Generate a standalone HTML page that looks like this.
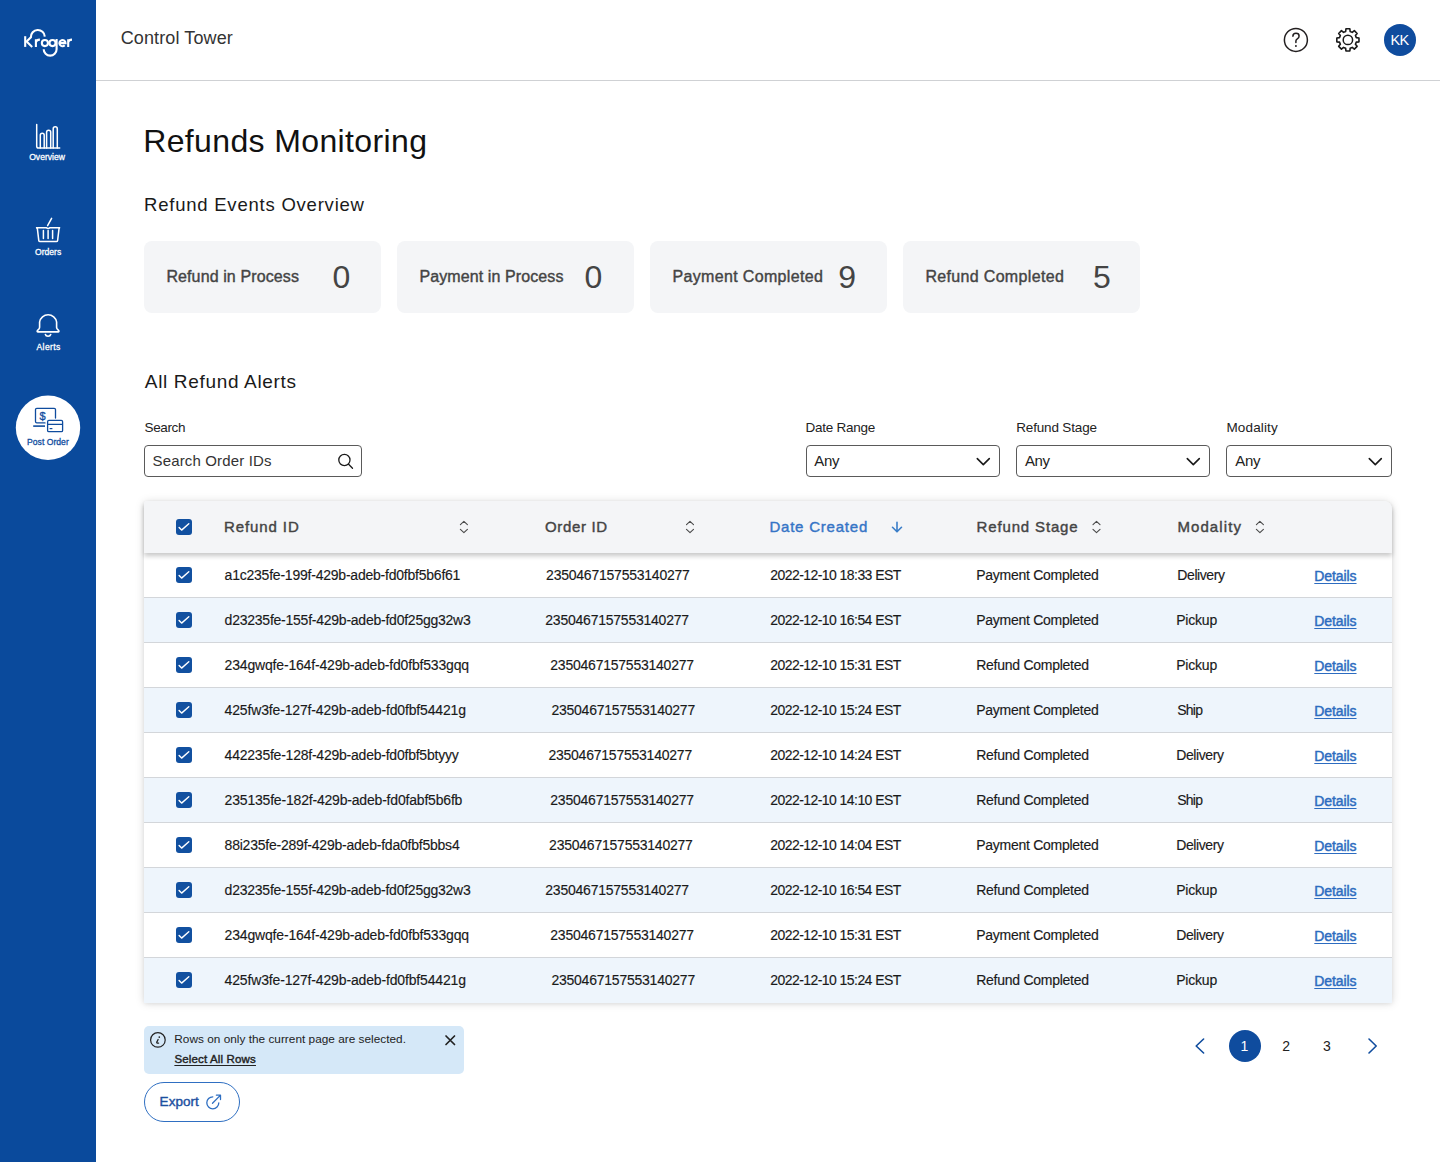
<!DOCTYPE html>
<html><head><meta charset="utf-8"><title>Control Tower - Refunds Monitoring</title>
<style>
*{box-sizing:border-box}
html,body{margin:0;padding:0}
body{width:1440px;height:1162px;overflow:hidden;position:relative;background:#fff;font-family:"Liberation Sans",sans-serif}
.t{position:absolute;white-space:nowrap;line-height:1}
.abs{position:absolute}
.side{left:0;top:0;width:96px;height:1162px;background:#0A4A9C}
.hdrline{left:96px;top:80px;width:1344px;height:1px;background:#CFD1D4}
.card{width:237px;height:72px;top:241px;background:#F4F5F7;border-radius:8px}
.inp{top:445px;height:32px;border:1px solid #5A5A5A;border-radius:4px;background:#fff}
.tbl{left:144px;top:501px;width:1248px;height:501px;border-radius:3px 8px 0 0;box-shadow:0 1px 10px rgba(0,0,0,0.15),0 2px 4px rgba(0,0,0,0.06);background:#fff}
.th{left:144px;top:501px;width:1248px;height:52px;background:#F4F5F7;border-radius:3px 8px 0 0;box-shadow:0 3px 5px rgba(0,0,0,0.22)}
.row{left:144px;width:1248px;height:45px}
.sep{left:144px;width:1248px;height:1px;background:#D3D6DA}
.cb{left:176px;width:16px;height:16px;border-radius:3px;background:#1150A0}
.cb svg{position:absolute;left:0;top:0}
svg{position:absolute;overflow:visible}
</style></head>
<body>
<!-- sidebar -->
<div class="abs side"></div>
<svg style="left:0;top:0" width="96" height="470" viewBox="0 0 96 470">
  <!-- Kroger logo -->
  <g fill="none" stroke="#fff" stroke-width="2.1">
    <path d="M25.2 36.2 V46.9"/>
    <path d="M32.2 46.9 L26.6 41.6 L30.9 37.3 A6.95 6.95 0 0 1 44.8 36.6"/>
    <path d="M35.9 46.9 V39.2 M35.9 42.2 Q36.4 39.6 39.9 39.6"/>
    <circle cx="44.9" cy="43.05" r="3.05"/>
    <circle cx="52.5" cy="43.05" r="3.05"/>
    <path d="M56.6 38.9 V49.2 A6.45 6.45 0 0 1 43.7 49.2"/>
    <path d="M59.4 43.1 H65.5 A3.05 3.05 0 1 0 64.7 45.2"/>
    <path d="M68.2 46.9 V39.2 M68.2 42.2 Q68.7 39.6 72 39.6"/>
  </g>
  <!-- overview icon -->
  <g fill="none" stroke="#fff" stroke-width="1.5" stroke-linecap="round" stroke-linejoin="round">
    <path d="M36.7 124.4 V146.3 Q36.7 148.1 38.5 148.1 H59.7"/>
    <path d="M40.3 148 V135.2 A1.95 1.95 0 0 1 44.2 135.2 V148"/>
    <path d="M46.6 148 V132.3 A2.05 2.05 0 0 1 50.7 132.3 V148"/>
    <path d="M53.2 148 V128.9 A2.05 2.05 0 0 1 57.3 128.9 V148"/>
  </g>
  <!-- orders basket -->
  <g fill="none" stroke="#fff" stroke-width="1.5" stroke-linecap="round" stroke-linejoin="round">
    <path d="M51.6 218.4 L47.6 225.6"/>
    <path d="M36.6 227.7 H46.2 Q48.1 229.2 50 227.7 H59.6 L59 228.8 L57.6 240.6 Q57.4 241.6 56.4 241.6 H40 Q39 241.6 38.8 240.6 L37.4 228.8 Z"/>
    <path d="M43.4 230.4 V238.4 M48.1 230.4 V238.4 M52.6 230.4 V238.4"/>
  </g>
  <!-- alerts bell -->
  <g fill="none" stroke="#fff" stroke-width="1.6" stroke-linecap="round" stroke-linejoin="round">
    <path d="M37.9 331.9 H58.2 Q59.2 331.9 58.8 330.8 L56.9 328.4 Q56.6 327.9 56.6 327 V322 A8.6 8.6 0 0 0 39.6 322 V327 Q39.6 327.9 39.3 328.4 L37.3 330.8 Q36.9 331.9 37.9 331.9 Z"/>
    <path d="M45.4 334.5 A2.7 2.2 0 0 0 50.7 334.5"/>
  </g>
  <!-- post order bubble -->
  <circle cx="48" cy="427.8" r="32.2" fill="#fff"/>
  <g fill="none" stroke="#0F4C9E" stroke-width="1.3" stroke-linecap="round" stroke-linejoin="round">
    <path d="M45 422.9 H36.8 Q35.5 422.9 35.5 421.6 V409.6 Q35.5 408.3 36.8 408.3 H54.2 Q55.5 408.3 55.5 409.6 V418"/>
    <rect x="47.6" y="420.4" width="15" height="11.3" rx="1.3"/>
    <path d="M47.8 424.3 H62.4"/>
  </g>
  <path d="M33.2 426.1 H45" stroke="#0F4C9E" stroke-width="1.6"/>
  <path d="M49.6 428.6 H52.4" stroke="#0F4C9E" stroke-width="1.2"/>
  <text x="42.5" y="420.4" font-family="Liberation Sans" font-weight="400" font-size="11" fill="#0F4C9E" stroke="#0F4C9E" stroke-width="0.3" text-anchor="middle">$</text>
</svg>

<!-- header -->
<div class="abs hdrline"></div>
<svg style="left:1270px;top:20px" width="170" height="44" viewBox="1270 20 170 44">
  <circle cx="1295.9" cy="39.9" r="11.5" fill="none" stroke="#231F20" stroke-width="1.5"/>
  <path d="M1292.9 36.2 Q1292.9 33.3 1296 33.3 Q1299.1 33.3 1299.1 36 Q1299.1 37.9 1297.3 38.9 Q1295.9 39.7 1295.9 41.1 V42.6" fill="none" stroke="#231F20" stroke-width="1.5" stroke-linecap="round"/>
  <circle cx="1295.9" cy="46" r="0.95" fill="#231F20"/>
  <path d="M1345.65 31.50 L1345.95 28.82 L1349.85 28.82 L1350.15 31.50 L1352.25 32.37 L1354.35 30.68 L1357.12 33.45 L1355.43 35.55 L1356.30 37.65 L1358.98 37.95 L1358.98 41.85 L1356.30 42.15 L1355.43 44.25 L1357.12 46.35 L1354.35 49.12 L1352.25 47.43 L1350.15 48.30 L1349.85 50.98 L1345.95 50.98 L1345.65 48.30 L1343.55 47.43 L1341.45 49.12 L1338.68 46.35 L1340.37 44.25 L1339.50 42.15 L1336.82 41.85 L1336.82 37.95 L1339.50 37.65 L1340.37 35.55 L1338.68 33.45 L1341.45 30.68 L1343.55 32.37 Z" fill="none" stroke="#1a1a1a" stroke-width="1.6" stroke-linejoin="round"/><circle cx="1347.9" cy="39.9" r="4.7" fill="none" stroke="#1a1a1a" stroke-width="1.5"/>
  <circle cx="1400" cy="39.9" r="16" fill="#0F4C9E"/>
</svg>

<!-- cards -->
<div class="abs card" style="left:144px"></div>
<div class="abs card" style="left:397px"></div>
<div class="abs card" style="left:650px"></div>
<div class="abs card" style="left:903px"></div>

<!-- inputs -->
<div class="abs inp" style="left:144px;width:218px"></div>
<div class="abs inp" style="left:806px;width:194px"></div>
<div class="abs inp" style="left:1016px;width:194px"></div>
<div class="abs inp" style="left:1226px;width:166px"></div>
<svg style="left:300px;top:440px" width="1100" height="40" viewBox="300 440 1100 40">
  <g fill="none" stroke="#1a1a1a" stroke-width="1.3" stroke-linecap="round">
    <circle cx="344.4" cy="460" r="5.6"/>
    <path d="M348.6 464.3 L352.5 468.3"/>
  </g>
  <g fill="none" stroke="#1a1a1a" stroke-width="1.6" stroke-linecap="round" stroke-linejoin="round">
    <path d="M977.3 458.6 L983.3 464.6 L989.3 458.6"/>
    <path d="M1187.3 458.6 L1193.3 464.6 L1199.3 458.6"/>
    <path d="M1369.3 458.6 L1375.3 464.6 L1381.3 458.6"/>
  </g>
</svg>

<!-- table -->
<div class="abs tbl"></div>
<div class="abs row" style="top:553px;background:#fff"></div>
<div class="abs row" style="top:598px;background:#EEF5FC"></div>
<div class="abs row" style="top:643px;background:#fff"></div>
<div class="abs row" style="top:688px;background:#EEF5FC"></div>
<div class="abs row" style="top:733px;background:#fff"></div>
<div class="abs row" style="top:778px;background:#EEF5FC"></div>
<div class="abs row" style="top:823px;background:#fff"></div>
<div class="abs row" style="top:868px;background:#EEF5FC"></div>
<div class="abs row" style="top:913px;background:#fff"></div>
<div class="abs row" style="top:958px;background:#EEF5FC"></div>
<div class="abs sep" style="top:597px"></div>
<div class="abs sep" style="top:642px"></div>
<div class="abs sep" style="top:687px"></div>
<div class="abs sep" style="top:732px"></div>
<div class="abs sep" style="top:777px"></div>
<div class="abs sep" style="top:822px"></div>
<div class="abs sep" style="top:867px"></div>
<div class="abs sep" style="top:912px"></div>
<div class="abs sep" style="top:957px"></div>
<div class="abs th"></div>
<div class="abs cb" style="top:519px"><svg width="16" height="16" viewBox="0 0 16 16"><path d="M3.1 8.5 L5.6 11.1 L12.8 4.8" fill="none" stroke="#fff" stroke-width="1.4" stroke-linecap="round" stroke-linejoin="round"/></svg></div>
<div class="abs cb" style="top:567px"><svg width="16" height="16" viewBox="0 0 16 16"><path d="M3.1 8.5 L5.6 11.1 L12.8 4.8" fill="none" stroke="#fff" stroke-width="1.4" stroke-linecap="round" stroke-linejoin="round"/></svg></div>
<div class="abs cb" style="top:612px"><svg width="16" height="16" viewBox="0 0 16 16"><path d="M3.1 8.5 L5.6 11.1 L12.8 4.8" fill="none" stroke="#fff" stroke-width="1.4" stroke-linecap="round" stroke-linejoin="round"/></svg></div>
<div class="abs cb" style="top:657px"><svg width="16" height="16" viewBox="0 0 16 16"><path d="M3.1 8.5 L5.6 11.1 L12.8 4.8" fill="none" stroke="#fff" stroke-width="1.4" stroke-linecap="round" stroke-linejoin="round"/></svg></div>
<div class="abs cb" style="top:702px"><svg width="16" height="16" viewBox="0 0 16 16"><path d="M3.1 8.5 L5.6 11.1 L12.8 4.8" fill="none" stroke="#fff" stroke-width="1.4" stroke-linecap="round" stroke-linejoin="round"/></svg></div>
<div class="abs cb" style="top:747px"><svg width="16" height="16" viewBox="0 0 16 16"><path d="M3.1 8.5 L5.6 11.1 L12.8 4.8" fill="none" stroke="#fff" stroke-width="1.4" stroke-linecap="round" stroke-linejoin="round"/></svg></div>
<div class="abs cb" style="top:792px"><svg width="16" height="16" viewBox="0 0 16 16"><path d="M3.1 8.5 L5.6 11.1 L12.8 4.8" fill="none" stroke="#fff" stroke-width="1.4" stroke-linecap="round" stroke-linejoin="round"/></svg></div>
<div class="abs cb" style="top:837px"><svg width="16" height="16" viewBox="0 0 16 16"><path d="M3.1 8.5 L5.6 11.1 L12.8 4.8" fill="none" stroke="#fff" stroke-width="1.4" stroke-linecap="round" stroke-linejoin="round"/></svg></div>
<div class="abs cb" style="top:882px"><svg width="16" height="16" viewBox="0 0 16 16"><path d="M3.1 8.5 L5.6 11.1 L12.8 4.8" fill="none" stroke="#fff" stroke-width="1.4" stroke-linecap="round" stroke-linejoin="round"/></svg></div>
<div class="abs cb" style="top:927px"><svg width="16" height="16" viewBox="0 0 16 16"><path d="M3.1 8.5 L5.6 11.1 L12.8 4.8" fill="none" stroke="#fff" stroke-width="1.4" stroke-linecap="round" stroke-linejoin="round"/></svg></div>
<div class="abs cb" style="top:972px"><svg width="16" height="16" viewBox="0 0 16 16"><path d="M3.1 8.5 L5.6 11.1 L12.8 4.8" fill="none" stroke="#fff" stroke-width="1.4" stroke-linecap="round" stroke-linejoin="round"/></svg></div>
<svg style="left:440px;top:510px" width="840" height="30" viewBox="440 510 840 30"><path d="M460.4 524.6 L463.9 521.3 L467.4 524.6 M460.4 529.4 L463.9 532.7 L467.4 529.4 M686.5 524.6 L690.0 521.3 L693.5 524.6 M686.5 529.4 L690.0 532.7 L693.5 529.4 M1093.0 524.6 L1096.5 521.3 L1100.0 524.6 M1093.0 529.4 L1096.5 532.7 L1100.0 529.4 M1256.4 524.6 L1259.9 521.3 L1263.4 524.6 M1256.4 529.4 L1259.9 532.7 L1263.4 529.4" fill="none" stroke="#4a4a4a" stroke-width="1.1" stroke-linecap="round" stroke-linejoin="round"/><path d="M897 522.2 V531 M892.5 527.3 L897 531.8 L901.5 527.3" fill="none" stroke="#3A7DC8" stroke-width="1.6" stroke-linecap="round" stroke-linejoin="round"/></svg>

<!-- banner -->
<div class="abs" style="left:144px;top:1026px;width:320px;height:48px;background:#D5E8F8;border-radius:5px"></div>
<svg style="left:140px;top:1026px" width="330" height="48" viewBox="140 1026 330 48">
  <circle cx="157.9" cy="1039.9" r="7.3" fill="none" stroke="#222" stroke-width="1.2"/>
  <path d="M158.1 1039.5 L156.8 1042.1 Q156.3 1043.5 158.6 1043.1" fill="none" stroke="#222" stroke-width="1.3" stroke-linecap="round" stroke-linejoin="round"/>
  <circle cx="159.3" cy="1037.1" r="0.85" fill="#222"/>
  <path d="M446 1036 L454.5 1044.5 M454.5 1036 L446 1044.5" stroke="#222" stroke-width="1.7" stroke-linecap="round"/>
</svg>

<!-- export -->
<div class="abs" style="left:144px;top:1082px;width:96px;height:40px;border:1.2px solid #2F6FC2;border-radius:20px"></div>
<svg style="left:200px;top:1088px" width="30" height="28" viewBox="200 1088 30 28">
  <g fill="none" stroke="#2F6FC2" stroke-width="1.3" stroke-linecap="round" stroke-linejoin="round">
    <path d="M212.8 1096.8 A6 6 0 1 0 218.8 1102.8"/>
    <path d="M212.5 1103.2 L220.3 1095.4 M216.4 1095.2 H220.5 V1099.5"/>
  </g>
</svg>

<!-- pagination -->
<svg style="left:1180px;top:1020px" width="210" height="52" viewBox="1180 1020 210 52">
  <g fill="none" stroke="#0F4C9E" stroke-width="1.6" stroke-linecap="round" stroke-linejoin="round">
    <path d="M1203.6 1039 L1196.2 1046 L1203.6 1053"/>
    <path d="M1369 1039 L1376.2 1046 L1369 1053"/>
  </g>
  <circle cx="1245" cy="1046" r="16" fill="#0F4C9E"/>
</svg>

<div class="t" style="left:120.70px;top:28.56px;font-size:18px;font-weight:400;color:#333;letter-spacing:0.121px;">Control Tower</div>
<div class="t" style="left:29.20px;top:152.92px;font-size:8.6px;font-weight:400;color:#fff;letter-spacing:-0.015px;-webkit-text-stroke:0.28px #fff;">Overview</div>
<div class="t" style="left:35.00px;top:247.92px;font-size:8.6px;font-weight:400;color:#fff;-webkit-text-stroke:0.28px #fff;">Orders</div>
<div class="t" style="left:36.50px;top:342.92px;font-size:8.6px;font-weight:400;color:#fff;letter-spacing:0.386px;-webkit-text-stroke:0.28px #fff;">Alerts</div>
<div class="t" style="left:27.00px;top:437.92px;font-size:8.6px;font-weight:400;color:#0F4C9E;letter-spacing:0.023px;-webkit-text-stroke:0.28px #0F4C9E;">Post Order</div>
<div class="t" style="left:1390.40px;top:32.83px;font-size:14.5px;font-weight:400;color:#fff;letter-spacing:-0.671px;">KK</div>
<div class="t" style="left:143.20px;top:125.21px;font-size:32px;font-weight:400;color:#111;letter-spacing:0.371px;">Refunds Monitoring</div>
<div class="t" style="left:144.00px;top:196.04px;font-size:18.5px;font-weight:400;color:#1a1a1a;letter-spacing:0.780px;">Refund Events Overview</div>
<div class="t" style="left:144.80px;top:372.12px;font-size:19px;font-weight:400;color:#1a1a1a;letter-spacing:0.668px;">All Refund Alerts</div>
<div class="t" style="left:166.40px;top:268.96px;font-size:16px;font-weight:400;color:#444;letter-spacing:0.110px;-webkit-text-stroke:0.4px #444;">Refund in Process</div>
<div class="t" style="left:332.60px;top:260.91px;font-size:32px;font-weight:400;color:#444;">0</div>
<div class="t" style="left:419.40px;top:268.96px;font-size:16px;font-weight:400;color:#444;letter-spacing:0.101px;-webkit-text-stroke:0.4px #444;">Payment in Process</div>
<div class="t" style="left:584.60px;top:260.91px;font-size:32px;font-weight:400;color:#444;">0</div>
<div class="t" style="left:672.40px;top:268.96px;font-size:16px;font-weight:400;color:#444;letter-spacing:0.346px;-webkit-text-stroke:0.4px #444;">Payment Completed</div>
<div class="t" style="left:838.30px;top:260.91px;font-size:32px;font-weight:400;color:#444;">9</div>
<div class="t" style="left:925.40px;top:268.96px;font-size:16px;font-weight:400;color:#444;letter-spacing:0.332px;-webkit-text-stroke:0.4px #444;">Refund Completed</div>
<div class="t" style="left:1093.00px;top:260.91px;font-size:32px;font-weight:400;color:#444;">5</div>
<div class="t" style="left:144.50px;top:420.67px;font-size:13.5px;font-weight:400;color:#222;letter-spacing:-0.353px;">Search</div>
<div class="t" style="left:805.60px;top:420.77px;font-size:13.5px;font-weight:400;color:#222;letter-spacing:-0.271px;">Date Range</div>
<div class="t" style="left:1016.20px;top:420.77px;font-size:13.5px;font-weight:400;color:#222;letter-spacing:-0.159px;">Refund Stage</div>
<div class="t" style="left:1226.50px;top:420.77px;font-size:13.5px;font-weight:400;color:#222;letter-spacing:0.126px;">Modality</div>
<div class="t" style="left:152.50px;top:453.30px;font-size:15px;font-weight:400;color:#333;letter-spacing:0.153px;">Search Order IDs</div>
<div class="t" style="left:814.30px;top:453.20px;font-size:15px;font-weight:400;color:#222;letter-spacing:-0.324px;">Any</div>
<div class="t" style="left:1024.90px;top:453.20px;font-size:15px;font-weight:400;color:#222;letter-spacing:-0.324px;">Any</div>
<div class="t" style="left:1235.30px;top:453.20px;font-size:15px;font-weight:400;color:#222;letter-spacing:-0.324px;">Any</div>
<div class="t" style="left:223.90px;top:519.30px;font-size:15px;font-weight:400;color:#444;letter-spacing:0.912px;-webkit-text-stroke:0.4px #444;">Refund ID</div>
<div class="t" style="left:545.00px;top:519.30px;font-size:15px;font-weight:400;color:#444;letter-spacing:0.660px;-webkit-text-stroke:0.4px #444;">Order ID</div>
<div class="t" style="left:769.40px;top:519.30px;font-size:15px;font-weight:400;color:#3574C6;letter-spacing:0.784px;-webkit-text-stroke:0.4px #3574C6;">Date Created</div>
<div class="t" style="left:976.60px;top:519.30px;font-size:15px;font-weight:400;color:#444;letter-spacing:0.846px;-webkit-text-stroke:0.4px #444;">Refund Stage</div>
<div class="t" style="left:1177.40px;top:519.30px;font-size:15px;font-weight:400;color:#444;letter-spacing:1.092px;-webkit-text-stroke:0.4px #444;">Modality</div>
<div class="t" style="left:224.60px;top:568.15px;font-size:14px;font-weight:400;color:#1a1a1a;letter-spacing:-0.224px;-webkit-text-stroke:0.15px #1a1a1a;">a1c235fe-199f-429b-adeb-fd0fbf5b6f61</div>
<div class="t" style="left:546.10px;top:568.15px;font-size:14px;font-weight:400;color:#1a1a1a;letter-spacing:-0.231px;-webkit-text-stroke:0.15px #1a1a1a;">2350467157553140277</div>
<div class="t" style="left:770.30px;top:568.15px;font-size:14px;font-weight:400;color:#1a1a1a;letter-spacing:-0.563px;-webkit-text-stroke:0.15px #1a1a1a;">2022-12-10 18:33 EST</div>
<div class="t" style="left:976.20px;top:568.15px;font-size:14px;font-weight:400;color:#1a1a1a;letter-spacing:-0.272px;-webkit-text-stroke:0.15px #1a1a1a;">Payment Completed</div>
<div class="t" style="left:1177.30px;top:568.15px;font-size:14px;font-weight:400;color:#1a1a1a;letter-spacing:-0.409px;-webkit-text-stroke:0.15px #1a1a1a;">Delivery</div>
<div class="t" style="left:1314.30px;top:569.05px;font-size:14px;font-weight:400;color:#2C6CC0;letter-spacing:-0.082px;-webkit-text-stroke:0.45px #2C6CC0;text-decoration:underline;text-decoration-thickness:1px;text-underline-offset:1.5px;">Details</div>
<div class="t" style="left:224.60px;top:613.15px;font-size:14px;font-weight:400;color:#1a1a1a;letter-spacing:-0.239px;-webkit-text-stroke:0.15px #1a1a1a;">d23235fe-155f-429b-adeb-fd0f25gg32w3</div>
<div class="t" style="left:545.30px;top:613.15px;font-size:14px;font-weight:400;color:#1a1a1a;letter-spacing:-0.231px;-webkit-text-stroke:0.15px #1a1a1a;">2350467157553140277</div>
<div class="t" style="left:770.30px;top:613.15px;font-size:14px;font-weight:400;color:#1a1a1a;letter-spacing:-0.563px;-webkit-text-stroke:0.15px #1a1a1a;">2022-12-10 16:54 EST</div>
<div class="t" style="left:976.20px;top:613.15px;font-size:14px;font-weight:400;color:#1a1a1a;letter-spacing:-0.272px;-webkit-text-stroke:0.15px #1a1a1a;">Payment Completed</div>
<div class="t" style="left:1176.20px;top:613.15px;font-size:14px;font-weight:400;color:#1a1a1a;letter-spacing:-0.207px;-webkit-text-stroke:0.15px #1a1a1a;">Pickup</div>
<div class="t" style="left:1314.30px;top:614.05px;font-size:14px;font-weight:400;color:#2C6CC0;letter-spacing:-0.082px;-webkit-text-stroke:0.45px #2C6CC0;text-decoration:underline;text-decoration-thickness:1px;text-underline-offset:1.5px;">Details</div>
<div class="t" style="left:224.60px;top:658.15px;font-size:14px;font-weight:400;color:#1a1a1a;letter-spacing:-0.176px;-webkit-text-stroke:0.15px #1a1a1a;">234gwqfe-164f-429b-adeb-fd0fbf533gqq</div>
<div class="t" style="left:550.30px;top:658.15px;font-size:14px;font-weight:400;color:#1a1a1a;letter-spacing:-0.231px;-webkit-text-stroke:0.15px #1a1a1a;">2350467157553140277</div>
<div class="t" style="left:770.30px;top:658.15px;font-size:14px;font-weight:400;color:#1a1a1a;letter-spacing:-0.563px;-webkit-text-stroke:0.15px #1a1a1a;">2022-12-10 15:31 EST</div>
<div class="t" style="left:976.20px;top:658.15px;font-size:14px;font-weight:400;color:#1a1a1a;letter-spacing:-0.257px;-webkit-text-stroke:0.15px #1a1a1a;">Refund Completed</div>
<div class="t" style="left:1176.20px;top:658.15px;font-size:14px;font-weight:400;color:#1a1a1a;letter-spacing:-0.207px;-webkit-text-stroke:0.15px #1a1a1a;">Pickup</div>
<div class="t" style="left:1314.30px;top:659.05px;font-size:14px;font-weight:400;color:#2C6CC0;letter-spacing:-0.082px;-webkit-text-stroke:0.45px #2C6CC0;text-decoration:underline;text-decoration-thickness:1px;text-underline-offset:1.5px;">Details</div>
<div class="t" style="left:224.60px;top:703.15px;font-size:14px;font-weight:400;color:#1a1a1a;letter-spacing:-0.153px;-webkit-text-stroke:0.15px #1a1a1a;">425fw3fe-127f-429b-adeb-fd0fbf54421g</div>
<div class="t" style="left:551.40px;top:703.15px;font-size:14px;font-weight:400;color:#1a1a1a;letter-spacing:-0.231px;-webkit-text-stroke:0.15px #1a1a1a;">2350467157553140277</div>
<div class="t" style="left:770.30px;top:703.15px;font-size:14px;font-weight:400;color:#1a1a1a;letter-spacing:-0.563px;-webkit-text-stroke:0.15px #1a1a1a;">2022-12-10 15:24 EST</div>
<div class="t" style="left:976.20px;top:703.15px;font-size:14px;font-weight:400;color:#1a1a1a;letter-spacing:-0.272px;-webkit-text-stroke:0.15px #1a1a1a;">Payment Completed</div>
<div class="t" style="left:1177.20px;top:703.15px;font-size:14px;font-weight:400;color:#1a1a1a;letter-spacing:-0.745px;-webkit-text-stroke:0.15px #1a1a1a;">Ship</div>
<div class="t" style="left:1314.30px;top:704.05px;font-size:14px;font-weight:400;color:#2C6CC0;letter-spacing:-0.082px;-webkit-text-stroke:0.45px #2C6CC0;text-decoration:underline;text-decoration-thickness:1px;text-underline-offset:1.5px;">Details</div>
<div class="t" style="left:224.60px;top:748.15px;font-size:14px;font-weight:400;color:#1a1a1a;letter-spacing:-0.228px;-webkit-text-stroke:0.15px #1a1a1a;">442235fe-128f-429b-adeb-fd0fbf5btyyy</div>
<div class="t" style="left:548.40px;top:748.15px;font-size:14px;font-weight:400;color:#1a1a1a;letter-spacing:-0.231px;-webkit-text-stroke:0.15px #1a1a1a;">2350467157553140277</div>
<div class="t" style="left:770.30px;top:748.15px;font-size:14px;font-weight:400;color:#1a1a1a;letter-spacing:-0.563px;-webkit-text-stroke:0.15px #1a1a1a;">2022-12-10 14:24 EST</div>
<div class="t" style="left:976.20px;top:748.15px;font-size:14px;font-weight:400;color:#1a1a1a;letter-spacing:-0.257px;-webkit-text-stroke:0.15px #1a1a1a;">Refund Completed</div>
<div class="t" style="left:1176.20px;top:748.15px;font-size:14px;font-weight:400;color:#1a1a1a;letter-spacing:-0.409px;-webkit-text-stroke:0.15px #1a1a1a;">Delivery</div>
<div class="t" style="left:1314.30px;top:749.05px;font-size:14px;font-weight:400;color:#2C6CC0;letter-spacing:-0.082px;-webkit-text-stroke:0.45px #2C6CC0;text-decoration:underline;text-decoration-thickness:1px;text-underline-offset:1.5px;">Details</div>
<div class="t" style="left:224.60px;top:793.15px;font-size:14px;font-weight:400;color:#1a1a1a;letter-spacing:-0.190px;-webkit-text-stroke:0.15px #1a1a1a;">235135fe-182f-429b-adeb-fd0fabf5b6fb</div>
<div class="t" style="left:550.30px;top:793.15px;font-size:14px;font-weight:400;color:#1a1a1a;letter-spacing:-0.231px;-webkit-text-stroke:0.15px #1a1a1a;">2350467157553140277</div>
<div class="t" style="left:770.30px;top:793.15px;font-size:14px;font-weight:400;color:#1a1a1a;letter-spacing:-0.563px;-webkit-text-stroke:0.15px #1a1a1a;">2022-12-10 14:10 EST</div>
<div class="t" style="left:976.20px;top:793.15px;font-size:14px;font-weight:400;color:#1a1a1a;letter-spacing:-0.257px;-webkit-text-stroke:0.15px #1a1a1a;">Refund Completed</div>
<div class="t" style="left:1177.20px;top:793.15px;font-size:14px;font-weight:400;color:#1a1a1a;letter-spacing:-0.745px;-webkit-text-stroke:0.15px #1a1a1a;">Ship</div>
<div class="t" style="left:1314.30px;top:794.05px;font-size:14px;font-weight:400;color:#2C6CC0;letter-spacing:-0.082px;-webkit-text-stroke:0.45px #2C6CC0;text-decoration:underline;text-decoration-thickness:1px;text-underline-offset:1.5px;">Details</div>
<div class="t" style="left:224.60px;top:838.15px;font-size:14px;font-weight:400;color:#1a1a1a;letter-spacing:-0.222px;-webkit-text-stroke:0.15px #1a1a1a;">88i235fe-289f-429b-adeb-fda0fbf5bbs4</div>
<div class="t" style="left:549.10px;top:838.15px;font-size:14px;font-weight:400;color:#1a1a1a;letter-spacing:-0.231px;-webkit-text-stroke:0.15px #1a1a1a;">2350467157553140277</div>
<div class="t" style="left:770.30px;top:838.15px;font-size:14px;font-weight:400;color:#1a1a1a;letter-spacing:-0.563px;-webkit-text-stroke:0.15px #1a1a1a;">2022-12-10 14:04 EST</div>
<div class="t" style="left:976.20px;top:838.15px;font-size:14px;font-weight:400;color:#1a1a1a;letter-spacing:-0.272px;-webkit-text-stroke:0.15px #1a1a1a;">Payment Completed</div>
<div class="t" style="left:1176.20px;top:838.15px;font-size:14px;font-weight:400;color:#1a1a1a;letter-spacing:-0.409px;-webkit-text-stroke:0.15px #1a1a1a;">Delivery</div>
<div class="t" style="left:1314.30px;top:839.05px;font-size:14px;font-weight:400;color:#2C6CC0;letter-spacing:-0.082px;-webkit-text-stroke:0.45px #2C6CC0;text-decoration:underline;text-decoration-thickness:1px;text-underline-offset:1.5px;">Details</div>
<div class="t" style="left:224.60px;top:883.15px;font-size:14px;font-weight:400;color:#1a1a1a;letter-spacing:-0.239px;-webkit-text-stroke:0.15px #1a1a1a;">d23235fe-155f-429b-adeb-fd0f25gg32w3</div>
<div class="t" style="left:545.30px;top:883.15px;font-size:14px;font-weight:400;color:#1a1a1a;letter-spacing:-0.231px;-webkit-text-stroke:0.15px #1a1a1a;">2350467157553140277</div>
<div class="t" style="left:770.30px;top:883.15px;font-size:14px;font-weight:400;color:#1a1a1a;letter-spacing:-0.563px;-webkit-text-stroke:0.15px #1a1a1a;">2022-12-10 16:54 EST</div>
<div class="t" style="left:976.20px;top:883.15px;font-size:14px;font-weight:400;color:#1a1a1a;letter-spacing:-0.257px;-webkit-text-stroke:0.15px #1a1a1a;">Refund Completed</div>
<div class="t" style="left:1176.20px;top:883.15px;font-size:14px;font-weight:400;color:#1a1a1a;letter-spacing:-0.207px;-webkit-text-stroke:0.15px #1a1a1a;">Pickup</div>
<div class="t" style="left:1314.30px;top:884.05px;font-size:14px;font-weight:400;color:#2C6CC0;letter-spacing:-0.082px;-webkit-text-stroke:0.45px #2C6CC0;text-decoration:underline;text-decoration-thickness:1px;text-underline-offset:1.5px;">Details</div>
<div class="t" style="left:224.60px;top:928.15px;font-size:14px;font-weight:400;color:#1a1a1a;letter-spacing:-0.176px;-webkit-text-stroke:0.15px #1a1a1a;">234gwqfe-164f-429b-adeb-fd0fbf533gqq</div>
<div class="t" style="left:550.30px;top:928.15px;font-size:14px;font-weight:400;color:#1a1a1a;letter-spacing:-0.231px;-webkit-text-stroke:0.15px #1a1a1a;">2350467157553140277</div>
<div class="t" style="left:770.30px;top:928.15px;font-size:14px;font-weight:400;color:#1a1a1a;letter-spacing:-0.563px;-webkit-text-stroke:0.15px #1a1a1a;">2022-12-10 15:31 EST</div>
<div class="t" style="left:976.20px;top:928.15px;font-size:14px;font-weight:400;color:#1a1a1a;letter-spacing:-0.272px;-webkit-text-stroke:0.15px #1a1a1a;">Payment Completed</div>
<div class="t" style="left:1176.20px;top:928.15px;font-size:14px;font-weight:400;color:#1a1a1a;letter-spacing:-0.409px;-webkit-text-stroke:0.15px #1a1a1a;">Delivery</div>
<div class="t" style="left:1314.30px;top:929.05px;font-size:14px;font-weight:400;color:#2C6CC0;letter-spacing:-0.082px;-webkit-text-stroke:0.45px #2C6CC0;text-decoration:underline;text-decoration-thickness:1px;text-underline-offset:1.5px;">Details</div>
<div class="t" style="left:224.60px;top:973.15px;font-size:14px;font-weight:400;color:#1a1a1a;letter-spacing:-0.153px;-webkit-text-stroke:0.15px #1a1a1a;">425fw3fe-127f-429b-adeb-fd0fbf54421g</div>
<div class="t" style="left:551.40px;top:973.15px;font-size:14px;font-weight:400;color:#1a1a1a;letter-spacing:-0.231px;-webkit-text-stroke:0.15px #1a1a1a;">2350467157553140277</div>
<div class="t" style="left:770.30px;top:973.15px;font-size:14px;font-weight:400;color:#1a1a1a;letter-spacing:-0.563px;-webkit-text-stroke:0.15px #1a1a1a;">2022-12-10 15:24 EST</div>
<div class="t" style="left:976.20px;top:973.15px;font-size:14px;font-weight:400;color:#1a1a1a;letter-spacing:-0.257px;-webkit-text-stroke:0.15px #1a1a1a;">Refund Completed</div>
<div class="t" style="left:1176.20px;top:973.15px;font-size:14px;font-weight:400;color:#1a1a1a;letter-spacing:-0.207px;-webkit-text-stroke:0.15px #1a1a1a;">Pickup</div>
<div class="t" style="left:1314.30px;top:974.05px;font-size:14px;font-weight:400;color:#2C6CC0;letter-spacing:-0.082px;-webkit-text-stroke:0.45px #2C6CC0;text-decoration:underline;text-decoration-thickness:1px;text-underline-offset:1.5px;">Details</div>
<div class="t" style="left:174.30px;top:1033.71px;font-size:11.8px;font-weight:400;color:#222;letter-spacing:0.020px;">Rows on only the current page are selected.</div>
<div class="t" style="left:174.40px;top:1053.97px;font-size:11.5px;font-weight:400;color:#222;letter-spacing:0.154px;-webkit-text-stroke:0.4px #222;text-decoration:underline;text-decoration-thickness:1px;text-underline-offset:1.5px;">Select All Rows</div>
<div class="t" style="left:159.60px;top:1095.47px;font-size:13.5px;font-weight:400;color:#1C4F9F;letter-spacing:0.027px;-webkit-text-stroke:0.4px #1C4F9F;">Export</div>
<div class="t" style="left:1240.50px;top:1039.35px;font-size:14px;font-weight:400;color:#fff;">1</div>
<div class="t" style="left:1282.30px;top:1039.35px;font-size:14px;font-weight:400;color:#222;">2</div>
<div class="t" style="left:1323.10px;top:1039.35px;font-size:14px;font-weight:400;color:#222;">3</div>
</body></html>
